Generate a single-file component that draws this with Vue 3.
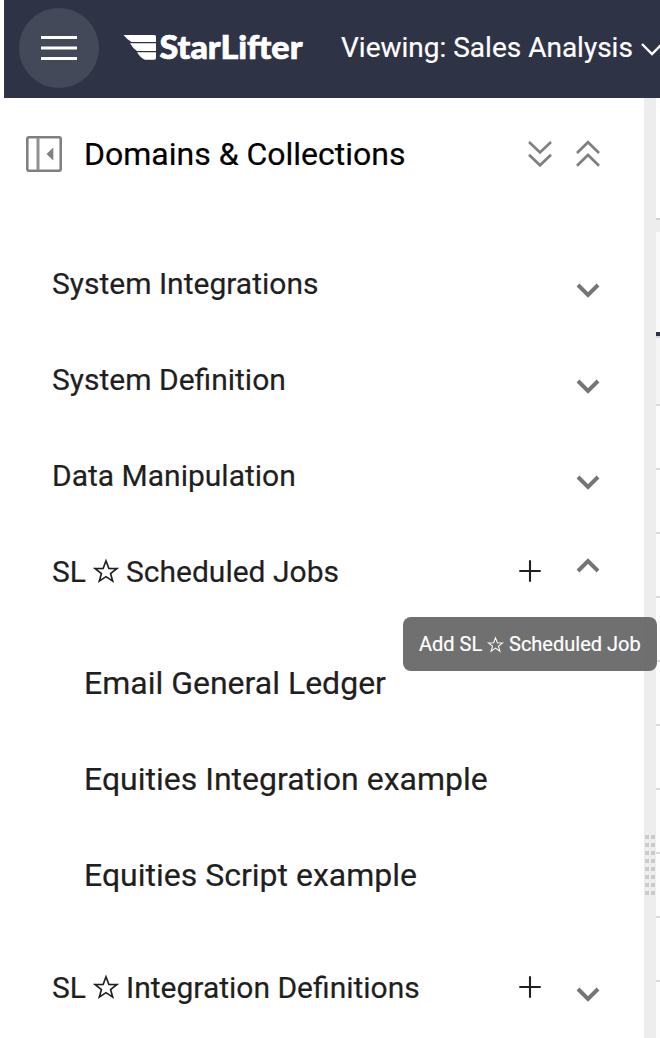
<script setup>
const groups = [
  { name: 'System Integrations' },
  { name: 'System Definition' },
  { name: 'Data Manipulation' },
  {
    name: 'Scheduled Jobs',
    starred: true,
    open: true,
    children: ['Email General Ledger', 'Equities Integration example', 'Equities Script example'],
  },
  { name: 'Integration Definitions', starred: true },
]
const rows = Array.from({ length: 11 }, (_, i) => i)
const dots = Array.from({ length: 16 }, (_, i) => i)
const star = 'M12 2.6 14.6 9.6 22 9.8 16.2 14.3 18.2 21.4 12 17.2 5.8 21.4 7.8 14.3 2 9.8 9.4 9.6Z'
</script>

<template>
  <div class="page">
    <header class="topbar">
      <button class="menu" aria-label="Menu">
        <svg width="36" height="24" viewBox="0 0 36 24"><path d="M0 1.5H36M0 12H36M0 22.5H36" stroke="#fff" stroke-width="2.8" /></svg>
      </button>
      <svg class="logo" width="182" height="44" viewBox="0 -4 182 44">
        <path d="M0.5 4H31.5Q33 4 33 5.5V11H8.5Q4.5 9 0.5 4ZM7 12.2H33V20H14Q10 17.5 7 12.2ZM14 21.2H33V27Q33 28.7 31.5 28.7H22Q18 27.5 14 21.2Z" fill="#fff" />
        <text x="36.5" y="28" textLength="143" lengthAdjust="spacingAndGlyphs">StarLifter</text>
      </svg>
      <div class="viewing">Viewing: Sales Analysis</div>
      <svg class="view-arrow" width="22" height="16" viewBox="0 0 22 16"><path d="M1 2 11 12 21 2" fill="none" stroke="#fff" stroke-width="2.4" /></svg>
    </header>

    <div class="body">
      <aside class="panel">
        <div class="head">
          <svg width="36" height="36" viewBox="0 0 36 36">
            <rect x="1.3" y="1.3" width="33.4" height="33.4" rx="1.6" fill="none" stroke="#808080" stroke-width="2.6" />
            <path d="M12 2V34" stroke="#929292" stroke-width="3" />
            <path d="M27.3 11.5V24.5L20.5 18Z" fill="#808080" />
          </svg>
          <h1>Domains &amp; Collections</h1>
          <svg class="expand" width="24" height="28" viewBox="0 0 24 28"><path d="M1 2 12 12.5 23 2M1 14.8 12 25.3 23 14.8" /></svg>
          <svg class="collapse" width="24" height="28" viewBox="0 0 24 28"><path d="M1 13 12 2.2 23 13M1 25.7 12 15 23 25.7" /></svg>
        </div>

        <template v-for="g in groups" :key="g.name">
          <div class="row" :class="{ starred: g.starred }">
            <span v-if="g.starred" class="prefix">SL</span>
            <svg v-if="g.starred" class="star" viewBox="0 0 24 24"><path :d="star" /></svg>
            <span class="label">{{ g.name }}</span>
            <span class="space"></span>
            <svg v-if="g.starred" class="plus" width="22" height="22" viewBox="0 0 22 22"><path d="M11 0.3V21.7M0.3 11H21.7" stroke="#1f1f1f" stroke-width="2.1" /></svg>
            <svg class="chevron" :class="{ up: g.open }" width="24" height="16" viewBox="0 0 24 16"><path d="M2 2 12 12 22 2" /></svg>
          </div>
          <div v-if="g.children" class="children">
            <div v-for="c in g.children" :key="c" class="child">{{ c }}</div>
            <div class="tooltip">
              <span class="tip-prefix">Add SL</span>
              <svg class="star" viewBox="0 0 24 24"><path :d="star" /></svg>
              <span>Scheduled Job</span>
            </div>
          </div>
        </template>
      </aside>

      <div class="splitter"><div class="grip"><i v-for="d in dots" :key="d"></i></div></div>

      <main class="content">
        <div class="block"></div>
        <div class="gap"></div>
        <div class="tabs"></div>
        <div v-for="r in rows" :key="r" class="line"></div>
      </main>
    </div>
  </div>
</template>

<style>
body { background: #fff; overflow: hidden; }
</style>

<style scoped>
* { box-sizing: border-box; }
.page { width: 660px; height: 1038px; overflow: hidden; padding-left: 4px; font-family: Roboto, "Liberation Sans", sans-serif; color: #1f1f1f; -webkit-text-stroke: 0.2px currentColor; }
.topbar { height: 98px; padding: 0 0 2px 15px; background: #2f3346; display: flex; align-items: center; overflow: hidden; }
.menu { flex: none; width: 80px; height: 80px; padding: 0; border: 0; border-radius: 50%; background: #444959; display: flex; align-items: center; justify-content: center; }
.logo { flex: none; margin-left: 24px; margin-top: 2px; }
.logo text { font: 900 33px Lato, sans-serif; fill: #fff; stroke: #fff; stroke-width: 0.7px; -webkit-text-stroke: 0.7px #fff; }
.viewing { flex: none; width: 292px; margin: -2px 0 0 36px; color: #fff; font-size: 28px; white-space: nowrap; }
.view-arrow { flex: none; margin-left: 8px; margin-top: 4px; }
.body { height: 940px; display: flex; }
.panel { flex: none; width: 640px; background: #fff; }
.head { height: 112px; padding-left: 22px; display: flex; align-items: center; margin-bottom: 25px; }
.head h1 { width: 444px; margin: 0 0 0 22px; font-size: 32px; font-weight: 400; color: #000; white-space: nowrap; }
.head .collapse { margin-left: 24px; }
.expand path, .collapse path { fill: none; stroke: #808080; stroke-width: 2.7; }
.expand, .collapse { flex: none; }
.row { height: 96px; padding: 0 44px 0 48px; display: flex; align-items: center; font-size: 30px; white-space: nowrap; }
.space { flex: 1; }
.prefix { width: 41px; }
.row .star { width: 26px; height: 26px; margin-right: 7px; }
.star { flex: none; }
.star path { fill: none; stroke: currentColor; stroke-width: 1.5; }
.plus { margin-right: 35px; }
.chevron { margin-top: 15px; }
.chevron.up { transform: rotate(180deg); margin-top: -12px; }
.chevron path { fill: none; stroke: #757575; stroke-width: 4; }
.children { position: relative; height: 320px; padding: 16px 0 0 80px; }
.child { height: 96px; display: flex; align-items: center; font-size: 32px; white-space: nowrap; }
.tooltip { position: absolute; left: 399px; top: -2px; width: 254px; height: 54px; padding-left: 16px; border-radius: 8px; background: rgba(97, 97, 97, 0.9); color: #fff; display: flex; align-items: center; font-size: 20px; white-space: nowrap; z-index: 2; }
.tip-prefix { width: 68px; }
.tooltip .star { width: 17px; height: 17px; margin-right: 5px; }
.splitter { flex: none; width: 12px; background: #ededed; padding: 737px 1px 0; }
.grip { display: grid; grid-template-columns: 4px 4px; column-gap: 2px; row-gap: 4px; }
.grip i { height: 4px; background: #cbcbcb; }
.content { flex: none; width: 4px; background: #fdfdfd; }
.block { height: 122px; border-bottom: 2px solid #d0d0d0; background: #fff; }
.gap { height: 12px; background: #ededed; }
.tabs { height: 106px; background: #fafafa; border-bottom: 2px solid #dadada; box-shadow: inset 0 -4px #2f3346; }
.line { height: 64px; border-bottom: 2px solid #dadada; }
.line:nth-child(4) { height: 68px; background: #f5f5f5; }
</style>
